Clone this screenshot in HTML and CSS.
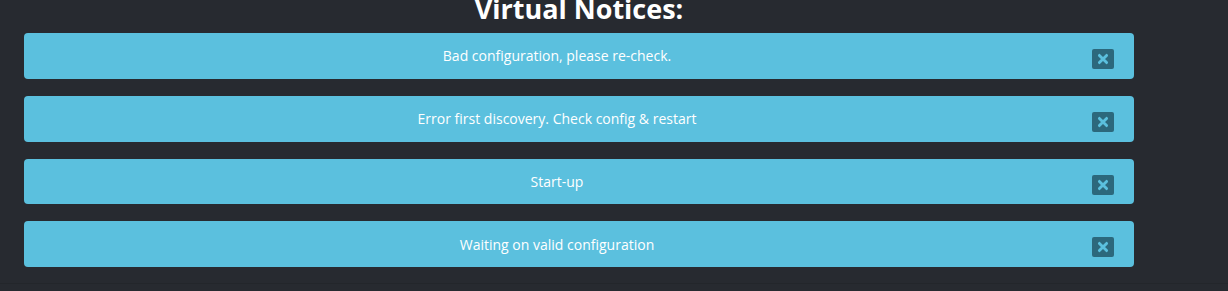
FILE: index.html
```html
<!DOCTYPE html>
<html lang="en">
<head>
    <meta charset="UTF-8">
    <meta name="viewport" content="width=device-width, initial-scale=1.0">
    <title>Virtual Notices</title>
    <link rel="stylesheet" href="styles.css">
</head>
<body>
    <div class="notices">
        <h2>Virtual Notices:</h2>

        <div class="alert">
            Bad configuration, please re-check.
            <button class="close" title="Dismiss"><svg viewBox="0 0 10 10"><path d="M2 2 L8 8 M8 2 L2 8"/></svg></button>
        </div>
        <div class="alert">
            Error first discovery. Check config &amp; restart
            <button class="close" title="Dismiss"><svg viewBox="0 0 10 10"><path d="M2 2 L8 8 M8 2 L2 8"/></svg></button>
        </div>
        <div class="alert">
            Start-up
            <button class="close" title="Dismiss"><svg viewBox="0 0 10 10"><path d="M2 2 L8 8 M8 2 L2 8"/></svg></button>
        </div>
        <div class="alert">
            Waiting on valid configuration
            <button class="close" title="Dismiss"><svg viewBox="0 0 10 10"><path d="M2 2 L8 8 M8 2 L2 8"/></svg></button>
        </div>
    </div>
    <div class="footer-line"></div>
</body>
</html>
```

FILE: styles.css
```css
body {
    font-family: "Open Sans", Arial, sans-serif;
    background-color: #272a30;
    color: #ffffff;
    margin: 0;
    padding: 0 24px;
    height: 291px;
    overflow: hidden;
}
.notices {
    width: 1110px;
    margin-top: -11px;
}
h2 {
    text-align: center;
    font-size: 27px;
    font-weight: 700;
    line-height: 40px;
    margin: 0 0 4px;
}
.alert {
    position: relative;
    background-color: #5bc0de;
    border-radius: 4px;
    height: 45.75px;
    padding: 0 64px 0 20px;
    margin-bottom: 17px;
    display: flex;
    align-items: center;
    justify-content: center;
    font-size: 14px;
}
.close {
    position: absolute;
    right: 20px;
    top: 16px;
    width: 22px;
    height: 20px;
    padding: 0;
    border: none;
    border-radius: 2px;
    background-color: #2c687c;
    cursor: pointer;
    display: flex;
    align-items: center;
    justify-content: center;
}
.close svg {
    width: 12px;
    height: 12px;
    stroke: #5bc0de;
    stroke-width: 2.4;
    stroke-linecap: round;
}
.footer-line {
    position: absolute;
    left: 0;
    right: 0;
    top: 283px;
    border-top: 1px solid #23262b;
}
```
